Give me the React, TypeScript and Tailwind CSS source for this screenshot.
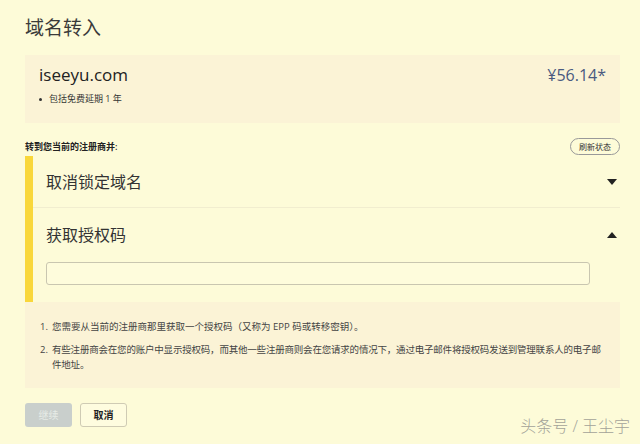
import React from "react";

const font = { fontFamily: '"Open Sans", "Noto Sans CJK SC", sans-serif' };

export default function App() {
  return (
    <div className="w-[640px] h-[444px] bg-[#fdfbd8] text-[#333] relative overflow-hidden" style={font}>
      <div className="pl-[25px] pr-[20px] pt-[14px]">
        <h1 className="text-[19px] leading-[28px] text-[#3a3a3a] font-normal">域名转入</h1>
        <div className="mt-[13px] bg-[#fbf3d6] h-[68px] px-[14px] pt-[8px]">
          <div className="flex justify-between items-start">
            <span className="text-[17px] leading-[24px] text-[#222]">iseeyu.com</span>
            <span className="text-[16px] leading-[24px] text-[#4a5a80]">¥56.14*</span>
          </div>
          <div className="mt-[6px] flex items-center text-[9px] leading-[12px] text-[#333]">
            <span className="w-[3px] h-[3px] rounded-full bg-[#333] mr-[7px]"></span>
            包括免费延期 1 年
          </div>
        </div>
        <div className="flex justify-between items-center mt-[14px] h-[19px]">
          <span className="text-[9px] font-semibold text-[#222]">转到您当前的注册商并:</span>
          <button className="h-[17px] px-[8px] rounded-full border border-[#999] text-[8px] text-[#333] bg-transparent">刷新状态</button>
        </div>
        <div className="flex mt-[0px]">
          <div className="w-[8px] bg-[#f9d73a] h-[146px] shrink-0"></div>
          <div className="flex-1">
            <div className="h-[52px] flex items-center justify-between pl-[13px] pr-[2px] border-b border-[#f1edcf]">
              <span className="text-[16px] text-[#333]">取消锁定域名</span>
              <svg width="12" height="8" viewBox="0 0 12 8"><path d="M1 1h10L6 7z" fill="#222" /></svg>
            </div>
            <div className="h-[54px] flex items-center justify-between pl-[13px] pr-[2px]">
              <span className="text-[16px] text-[#333]">获取授权码</span>
              <svg width="12" height="8" viewBox="0 0 12 8"><path d="M1 7h10L6 1z" fill="#222" /></svg>
            </div>
            <div className="pl-[13px] pr-[30px]">
              <div className="h-[23px] border border-[#c9c6b0] rounded-[3px] bg-[#fefcdc]"></div>
            </div>
          </div>
        </div>
        <div className="bg-[#fbf3d6] h-[86px] pl-[15px] pr-[10px] pt-[17px] text-[9.5px] leading-[15px] text-[#444]">
          <div className="flex"><span className="w-[12px] shrink-0">1.</span><span>您需要从当前的注册商那里获取一个授权码（又称为 EPP 码或转移密钥）。</span></div>
          <div className="flex mt-[8px]"><span className="w-[12px] shrink-0">2.</span><span className="tracking-[-0.2px]"><span className="whitespace-nowrap">有些注册商会在您的账户中显示授权码，而其他一些注册商则会在您请求的情况下，通过电子邮件将授权码发送到管理联系人的电子邮</span><br />件地址。</span></div>
        </div>
        <div className="flex gap-[8px] mt-[15px]">
          <button className="w-[47px] h-[24px] rounded-[3px] bg-[#c9cfcc] text-[10px] text-[#e6ebe6]">继续</button>
          <button className="w-[47px] h-[24px] rounded-[3px] border border-[#cfcbb4] bg-[#fefcdf] text-[10px] font-bold text-[#222]">取消</button>
        </div>
      </div>
      <div className="absolute right-[10px] bottom-[6px] text-[16px] font-light text-[#a3a398]">头条号 / 王尘宇</div>
    </div>
  );
}
